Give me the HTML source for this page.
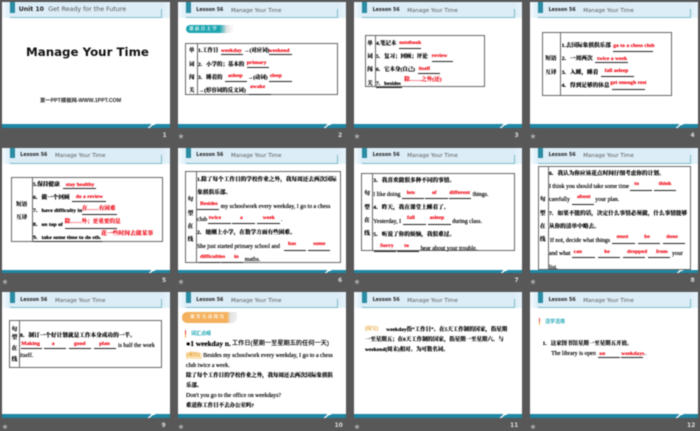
<!DOCTYPE html>
<html><head><meta charset="utf-8"><style>
html,body{margin:0;padding:0;width:700px;height:431px;overflow:hidden;background:#585858}
#w{position:absolute;left:0;top:0;width:700px;height:431px;filter:blur(.45px)}
.s{position:absolute;width:167.7px;height:125.7px;background:#fff;overflow:hidden}
.s::before{content:"";position:absolute;left:0;top:0;width:100%;height:16px;background:linear-gradient(90deg,#f4fafd,#dcedf7 8px,#dcedf7 160px,#e8f4fa)}
.f{position:absolute;left:0;top:122px;width:100%;height:3.7px;background:#1e87a4}
.n{position:absolute;left:147.5px;top:122px;width:2px;height:3.7px;background:#fff;transform:skewX(-50deg)}
.n2{position:absolute;left:149px;top:122px;width:4px;height:1px;background:#fff;transform:skewX(-50deg)}
.q{position:absolute;left:8px;top:0;width:5.2px;height:10.7px;background:#2a8ba3}
.l{position:absolute;left:7.7px;top:15px;width:152px;height:1px;background:#7dbccc}
.v{position:absolute;left:159.4px;top:7px;width:1px;height:9px;background:#7dbccc}
.h1,.h2{position:absolute;line-height:0;white-space:nowrap;font-family:"DejaVu Sans","Liberation Sans",sans-serif}
.h1{left:18.3px;top:8.7px;font-size:4.8px;font-weight:700;color:#222}
.h2{left:53px;top:8.7px;font-size:5.5px;color:#555}
.s b{position:absolute;line-height:0;white-space:nowrap;color:#000;font:700 5.65px/0 "Liberation Serif","Noto Serif CJK SC",serif;text-shadow:0 0 .4px #000}
.s.sm b{font-size:5.45px}
.s b.r{color:#f0101c;font-size:5.6px;text-shadow:0 0 .35px #f0101c}
.s b.e{font-weight:400;font-size:5.9px;color:#000;text-shadow:0 0 .35px #000}
.s i{position:absolute;height:.8px;background:#222}
.b{position:absolute;border:1px solid #666;box-sizing:border-box}
.w{position:absolute;width:1px;background:#666}
.m{position:absolute;font:700 6px/1 "DejaVu Sans",sans-serif;color:#ddd;white-space:nowrap}
.x{position:absolute;width:1.4px;height:7.3px;background:linear-gradient(#e8403a,#e8403a 55%,#f4b23c 55%)}
</style></head><body><div id="w">

<div class="s" style="left:2px;top:2px"><div class="q"></div><div class="l"></div><div class="v"></div>
<span class="h1" style="left:16.7px;top:7.7px;font-size:6.2px">Unit 10</span><span class="h2" style="left:46.3px;top:7.7px;font-size:6.3px">Get Ready for the Future</span>
<span style="position:absolute;left:24px;top:49.7px;line-height:0;white-space:nowrap;font:700 11.8px/0 'DejaVu Sans',sans-serif;color:#111">Manage Your Time</span>
<span style="position:absolute;left:38px;top:99px;line-height:0;white-space:nowrap;font:700 5.3px/0 'Liberation Sans','Noto Sans CJK SC',sans-serif;color:#222">第一PPT模板网-WWW.1PPT.COM</span>
<div class="f"></div><div class="n"></div><div class="n2"></div></div>

<div class="s sm" style="left:178px;top:2px"><div class="q"></div><div class="l"></div><div class="v"></div><span class="h1">Lesson 56</span><span class="h2">Manage Your Time</span>
<div style="position:absolute;left:8px;top:23px;width:48px;height:8px;border-radius:4px 0 4px 4px;background:linear-gradient(90deg,#1ea5b0,#1ea5b0 70%,#e4e4e4 85%,#fff)"></div>
<b style="left:11px;top:27px;color:#fff;font-size:4.6px;letter-spacing:1.2px;text-shadow:none">课前自主学</b>
<div class="b" style="left:7px;top:41px;width:153px;height:52px"></div><div class="w" style="left:19px;top:41px;height:52px"></div>
<b style="left:11px;top:49px">单</b><b style="left:11px;top:62.5px">词</b><b style="left:11px;top:75.5px">闯</b><b style="left:11px;top:89px">关</b>
<b style="left:20px;top:49px">1.工作日</b><i style="left:43px;top:52px;width:22px"></i><b class="r" style="left:43px;top:49px">weekday</b><b style="left:66px;top:49px">→(对应词)</b><i style="left:90.7px;top:52px;width:23px"></i><b class="r" style="left:90.7px;top:49px">weekend</b>
<b style="left:20px;top:62.5px">2．小学的；基本的</b><i style="left:68.7px;top:65px;width:22.6px"></i><b class="r" style="left:68.7px;top:61px">primary</b>
<b style="left:20px;top:75.5px">3．睡着的</b><i style="left:47px;top:78.7px;width:22.3px"></i><b class="r" style="left:50px;top:74px">asleep</b><b style="left:69.7px;top:75.5px">→(动词)</b><i style="left:91.3px;top:78.7px;width:22.4px"></i><b class="r" style="left:92px;top:73.5px">sleep</b>
<b style="left:20.7px;top:89px">→(形容词的反义词)</b><i style="left:71.3px;top:92px;width:21.4px"></i><b class="r" style="left:72px;top:85.3px">awake</b>
<div class="f"></div><div class="n"></div><div class="n2"></div></div>

<div class="s sm" style="left:354.3px;top:2px"><div class="q"></div><div class="l"></div><div class="v"></div><span class="h1">Lesson 56</span><span class="h2">Manage Your Time</span>
<div class="b" style="left:11px;top:33.3px;width:120px;height:52px"></div><div class="w" style="left:21px;top:33.3px;height:52px"></div>
<b style="left:13px;top:41.7px">单</b><b style="left:13px;top:55px">词</b><b style="left:13px;top:68.3px">闯</b><b style="left:13px;top:82px">关</b>
<b style="left:21.7px;top:41.7px">4.笔记本</b><i style="left:45px;top:46px;width:22px"></i><b class="r" style="left:45px;top:41.3px">notebook</b>
<b style="left:21.7px;top:55px">5．复习；回顾；评论</b><i style="left:77.3px;top:58.7px;width:21.7px"></i><b class="r" style="left:77.3px;top:53.7px">review</b>
<b style="left:21.7px;top:68.3px">6．它本身(自己)</b><i style="left:64px;top:71.3px;width:22px"></i><b class="r" style="left:64.3px;top:66.5px">itself</b>
<b style="left:21.7px;top:82px">7．besides</b><i style="left:21.7px;top:84.5px;width:26px"></i><b class="r" style="left:50px;top:78px">除……之外(还)</b>
<div class="f"></div><div class="n"></div><div class="n2"></div></div>

<div class="s" style="left:530.3px;top:2px"><div class="q"></div><div class="l"></div><div class="v"></div><span class="h1">Lesson 56</span><span class="h2">Manage Your Time</span>
<div class="b" style="left:12px;top:29.7px;width:129.3px;height:64px"></div><div class="w" style="left:30px;top:29.7px;height:64px"></div>
<b style="left:15px;top:57.3px">短语</b><b style="left:15px;top:70.7px">互译</b>
<b style="left:31.3px;top:44.3px">1.去国际象棋俱乐部</b><i style="left:83px;top:49px;width:39.3px"></i><b class="r" style="left:83px;top:44px">go to a chess club</b>
<b style="left:31.3px;top:57.3px">2．一周两次</b><i style="left:65px;top:60.3px;width:33px"></i><b class="r" style="left:66.7px;top:56.7px">twice a week</b>
<b style="left:31.3px;top:70.7px">3．入睡，睡着</b><i style="left:70.7px;top:73.7px;width:33.3px"></i><b class="r" style="left:74.3px;top:68.7px">fall asleep</b>
<b style="left:31.3px;top:84.3px">4．得到足够的休息</b><i style="left:81.7px;top:87.3px;width:33.3px"></i><b class="r" style="left:80px;top:81.3px">get enough rest</b>
<div class="f"></div><div class="n"></div><div class="n2"></div></div>

<div class="s" style="left:2px;top:147.7px"><div class="q"></div><div class="l"></div><div class="v"></div><span class="h1">Lesson 56</span><span class="h2">Manage Your Time</span>
<div class="b" style="left:9px;top:29px;width:151.7px;height:65px"></div><div class="w" style="left:30px;top:29px;height:65px"></div>
<b style="left:14px;top:57px">短语</b><b style="left:14px;top:70px">互译</b>
<b style="left:31px;top:37px">5.保持健康</b><i style="left:61.3px;top:40px;width:32.4px"></i><b class="r" style="left:63.7px;top:37.5px">stay healthy</b>
<b style="left:31px;top:50.3px">6．做一个回顾</b><i style="left:70.3px;top:53.7px;width:33.4px"></i><b class="r" style="left:73.7px;top:49.3px">do a review</b>
<b style="left:31px;top:63.7px">7．have difficulty in</b><i style="left:80px;top:66.7px;width:35.3px"></i><b class="r" style="left:80px;top:61.7px">在……有困难</b>
<b style="left:31px;top:77.3px">8．on top of</b><i style="left:62.7px;top:80px;width:52.6px"></i><b class="r" style="left:62.7px;top:74.7px">除……外；更重要的是</b>
<b style="left:31px;top:90.7px">9．take some time to do sth.</b><i style="left:31px;top:93px;width:69px"></i><b class="r" style="left:99px;top:86.7px;font-size:5.8px">花一些时间去做某事</b>
<div class="f"></div><div class="n"></div><div class="n2"></div></div>

<div class="s" style="left:178px;top:147.7px"><div class="q"></div><div class="l"></div><div class="v"></div><span class="h1">Lesson 56</span><span class="h2">Manage Your Time</span>
<div class="b" style="left:7px;top:23.7px;width:155.7px;height:91.3px"></div><div class="w" style="left:18px;top:23.7px;height:91.3px;width:1.4px"></div>
<b style="left:9.6px;top:52.3px">句</b><b style="left:9.6px;top:66px">型</b><b style="left:9.6px;top:79px">在</b><b style="left:9.6px;top:92.3px">线</b>
<b style="left:19px;top:32px">1.除了每个工作日的学校作业之外，我每周还去两次国际</b>
<b style="left:19.3px;top:45.7px">象棋俱乐部。</b>
<b class="r" style="left:22px;top:56.7px">Besides</b><i style="left:19.3px;top:61.7px;width:22px"></i><b class="e" style="left:42.7px;top:59px">my schoolwork every weekday, I go to a chess</b>
<b class="e" style="left:19px;top:72.3px">club</b><i style="left:30.3px;top:75px;width:22.4px"></i><b class="r" style="left:30.7px;top:70px">twice</b><i style="left:54.3px;top:75px;width:22.4px"></i><b class="r" style="left:62px;top:70px">a</b><i style="left:79.3px;top:75px;width:22.4px"></i><b class="r" style="left:84.7px;top:70px">week</b><b class="e" style="left:103px;top:72.3px">.</b>
<b style="left:19px;top:85.7px">2．她刚上小学，在数学方面有些困难。</b>
<b class="e" style="left:19px;top:99.3px">She just started primary school and</b><i style="left:105.7px;top:102px;width:22px"></i><b class="r" style="left:110px;top:96.3px">has</b><i style="left:130px;top:102px;width:22px"></i><b class="r" style="left:135.3px;top:96.3px">some</b>
<b class="r" style="left:22px;top:109.3px">difficulties</b><i style="left:21px;top:114px;width:21px"></i><b class="r" style="left:56px;top:109.3px">in</b><i style="left:42.7px;top:114px;width:22.6px"></i><b class="e" style="left:66.7px;top:112.7px">maths.</b>
<div class="f"></div><div class="n"></div><div class="n2"></div></div>

<div class="s" style="left:354.3px;top:147.7px"><div class="q"></div><div class="l"></div><div class="v"></div><span class="h1">Lesson 56</span><span class="h2">Manage Your Time</span>
<div class="b" style="left:7px;top:25.3px;width:153.3px;height:78px"></div><div class="w" style="left:17.3px;top:25.3px;height:78px;width:1.4px"></div>
<b style="left:10px;top:46.7px">句</b><b style="left:10px;top:60px">型</b><b style="left:10px;top:73.3px">在</b><b style="left:10px;top:86.7px">线</b>
<b style="left:19px;top:33.3px">3．我喜欢做很多种不同的事情。</b>
<b class="e" style="left:19px;top:47.3px">I like doing</b><i style="left:47.3px;top:50px;width:22.7px"></i><b class="r" style="left:52.3px;top:45px">lots</b><i style="left:71px;top:50px;width:22.3px"></i><b class="r" style="left:77.7px;top:45px">of</b><i style="left:95px;top:50px;width:22px"></i><b class="r" style="left:95px;top:45px">different</b><b class="e" style="left:118.3px;top:47.3px">things.</b>
<b style="left:19px;top:60.3px">4．昨天，我在课堂上睡着了。</b>
<b class="e" style="left:19px;top:74px">Yesterday, I</b><i style="left:48.7px;top:76.7px;width:22.6px"></i><b class="r" style="left:52.7px;top:70.7px">fall</b><i style="left:74px;top:76.7px;width:22.3px"></i><b class="r" style="left:75.3px;top:70.7px">asleep</b><b class="e" style="left:98px;top:74px">during class.</b>
<b style="left:19px;top:87.3px">5．听说了你的烦恼，我很难过。</b>
<b class="r" style="left:25.7px;top:98px">Sorry</b><i style="left:19.3px;top:103px;width:22px"></i><b class="r" style="left:50px;top:98px">to</b><i style="left:42.7px;top:103px;width:22.3px"></i><b class="e" style="left:66.3px;top:101px">hear about your trouble.</b>
<div class="f"></div><div class="n"></div><div class="n2"></div></div>

<div class="s" style="left:530.3px;top:147.7px"><div class="q"></div><div class="l"></div><div class="v"></div><span class="h1">Lesson 56</span><span class="h2">Manage Your Time</span>
<div class="f"></div><div class="n"></div><div class="n2"></div>
<div class="b" style="left:7.3px;top:18px;width:153px;height:104.3px"></div><div class="w" style="left:17.6px;top:18px;height:104.3px;width:1.4px"></div>
<b style="left:9.6px;top:52.7px">句</b><b style="left:9.6px;top:66px">型</b><b style="left:9.6px;top:79.3px">在</b><b style="left:9.6px;top:92.7px">线</b>
<b style="left:18.7px;top:26px">6．我认为你应该花点时间仔细考虑你的计划。</b>
<b class="e" style="left:18.7px;top:39.3px">I think you should take some time</b><i style="left:99.3px;top:42px;width:22px"></i><b class="r" style="left:104px;top:36.7px">to</b><i style="left:123.7px;top:42px;width:22px"></i><b class="r" style="left:128.3px;top:36.7px">think</b>
<b class="e" style="left:18.7px;top:52.7px">carefully</b><i style="left:41.7px;top:56px;width:22px"></i><b class="r" style="left:46.7px;top:49.7px">about</b><b class="e" style="left:65px;top:52.7px">your plan.</b>
<b style="left:18.7px;top:66px">7．如果不能的话，决定什么事情必须做，什么事情能够</b>
<b style="left:18.7px;top:79.3px">从你的清单中略去。</b>
<b class="e" style="left:19.7px;top:93px">If not, decide what things</b><i style="left:82px;top:95.7px;width:22.3px"></i><b class="r" style="left:86.3px;top:89.3px">must</b><i style="left:107.3px;top:95.7px;width:22.4px"></i><b class="r" style="left:114px;top:89.3px">be</b><i style="left:132.3px;top:95.7px;width:22.4px"></i><b class="r" style="left:136px;top:89.3px">done</b>
<b class="e" style="left:18.7px;top:106.3px">and what</b><i style="left:42px;top:109.3px;width:22.3px"></i><b class="r" style="left:43.3px;top:104px">can</b><i style="left:67.3px;top:109.3px;width:22.4px"></i><b class="r" style="left:74px;top:104px">be</b><i style="left:92.7px;top:109.3px;width:22px"></i><b class="r" style="left:96.7px;top:104px">dropped</b><i style="left:117.7px;top:109.3px;width:22px"></i><b class="r" style="left:125.7px;top:104px">from</b><b class="e" style="left:141.7px;top:106.3px">your</b>
<b class="e" style="left:18.7px;top:120px">list.</b>
</div>

<div class="s" style="left:2px;top:292.3px"><div class="q"></div><div class="l"></div><div class="v"></div><span class="h1">Lesson 56</span><span class="h2">Manage Your Time</span>
<div class="b" style="left:6.7px;top:28px;width:153.6px;height:47.3px"></div><div class="w" style="left:17px;top:28px;height:47.3px"></div>
<b style="left:9.6px;top:38px">句</b><b style="left:9.6px;top:46px">型</b><b style="left:9.6px;top:57px">在</b><b style="left:9.6px;top:68px">线</b>
<b style="left:18px;top:43.3px">8．制订一个好计划就是工作本身成功的一半。</b>
<b class="r" style="left:19.3px;top:51.3px">Making</b><i style="left:18.7px;top:56px;width:21.6px"></i><b class="r" style="left:49.7px;top:51.3px">a</b><i style="left:42px;top:56px;width:22px"></i><b class="r" style="left:72px;top:51.3px">good</b><i style="left:67px;top:56px;width:22px"></i><b class="r" style="left:97.3px;top:51.3px">plan</b><i style="left:92.3px;top:56px;width:22px"></i><b class="e" style="left:116px;top:53.3px">is half the work</b>
<b class="e" style="left:18px;top:63.7px">itself.</b>
<div class="f"></div><div class="n"></div><div class="n2"></div></div>

<div class="s sm" style="left:178px;top:292.3px"><div class="q"></div><div class="l"></div><div class="v"></div><span class="h1">Lesson 56</span><span class="h2">Manage Your Time</span>
<div style="position:absolute;left:4.3px;top:19.7px;width:55px;height:10.6px;border-radius:5px 0 5px 5px;background:linear-gradient(90deg,#f4b05c,#f4b05c 82%,#e2e2e2 88%,#eee)"></div>
<b style="left:12px;top:25px;color:#fff;font-size:4.6px;letter-spacing:1.3px;text-shadow:none">课堂互动探究</b>
<div class="x" style="left:7px;top:38px"></div><b style="left:13px;top:41.7px;color:#1aa5b5;font-family:'Liberation Sans','Noto Sans CJK SC',sans-serif;font-size:5px;text-shadow:none">词汇点睛</b>
<b style="left:8px;top:51.3px;font-size:7.3px">●1 weekday n.</b><b style="left:54px;top:51.3px;font-family:'Liberation Sans','Noto Sans CJK SC',sans-serif;font-size:6.2px;font-weight:400;color:#000">工作日(星期一至星期五的任何一天)</b>
<div style="position:absolute;left:8px;top:60.5px;width:16px;height:6px;background:#fbe3b8"></div><b style="left:8.5px;top:63.7px;color:#e8a030;font-size:5px;text-shadow:none">[观察]</b>
<b class="e" style="left:25.3px;top:63.7px">Besides my schoolwork every weekday, I go to a chess</b>
<b class="e" style="left:8px;top:73.7px">club twice a week.</b>
<b style="left:8px;top:83.7px">除了每个工作日的学校作业之外，我每周还去两次国际象棋俱</b>
<b style="left:8px;top:94px">乐部。</b>
<b class="e" style="left:8px;top:103.7px">Don't you go to the office on weekdays?</b>
<b style="left:8px;top:114px">难道你工作日不去办公室吗?</b>
<div class="f"></div><div class="n"></div><div class="n2"></div></div>

<div class="s sm" style="left:354.3px;top:292.3px"><div class="q"></div><div class="l"></div><div class="v"></div><span class="h1">Lesson 56</span><span class="h2">Manage Your Time</span>
<b style="left:10.7px;top:38px;color:#e8a030;font-size:5px;text-shadow:none">[探究]</b>
<b style="left:32px;top:38px">weekday指“工作日”。在5天工作制的国家，指星期</b>
<b style="left:10.7px;top:48px">一至星期五；在6天工作制的国家，指星期一至星期六。与</b>
<b style="left:10.7px;top:58px">weekend(周末)相对。为可数名词。</b>
<div class="f"></div><div class="n"></div><div class="n2"></div></div>

<div class="s sm" style="left:530.3px;top:292.3px"><div class="q"></div><div class="l"></div><div class="v"></div><span class="h1">Lesson 56</span><span class="h2">Manage Your Time</span>
<div class="x" style="left:8.3px;top:25.7px"></div><b style="left:14.7px;top:30px;color:#1aa5b5;font-family:'Liberation Sans','Noto Sans CJK SC',sans-serif;font-size:5px;text-shadow:none">活学活用</b>
<b style="left:12.3px;top:52px">1．这家图书馆星期一至星期五开放。</b>
<b class="e" style="left:21px;top:62px">The library is open</b><i style="left:68px;top:64.7px;width:21.7px"></i><b class="r" style="left:69px;top:62px">on</b><i style="left:91px;top:64.7px;width:22px"></i><b class="r" style="left:91px;top:62px">weekdays</b><b class="e" style="left:114.7px;top:62px">.</b>
<div class="f"></div><div class="n"></div><div class="n2"></div></div>

<span class="m" style="left:162.5px;top:132.5px">1</span><span class="m" style="left:338px;top:132.5px">2</span><span class="m" style="left:514.5px;top:132.5px">3</span><span class="m" style="left:690.5px;top:132.5px">4</span>
<span class="m" style="left:162px;top:277.5px">5</span><span class="m" style="left:338px;top:277.5px">6</span><span class="m" style="left:514.5px;top:277.5px">7</span><span class="m" style="left:690.5px;top:277.5px">8</span>
<span class="m" style="left:161.5px;top:422.5px">9</span><span class="m" style="left:334.5px;top:422.5px">10</span><span class="m" style="left:510px;top:422.5px">11</span><span class="m" style="left:687px;top:422.5px">12</span>

<svg style="position:absolute;left:0;top:0" width="700" height="431" fill="#a8a8a8">
<defs><path id="st" d="M3 0 3.8 1.8 5.8 2 4.3 3.3 4.7 5.3 3 4.3 1.3 5.3 1.7 3.3 .2 2 2.2 1.8Z"/></defs>
<use href="#st" x="178" y="133.5"/><use href="#st" x="354" y="133.5"/><use href="#st" x="530" y="133.5"/>
<use href="#st" x="2" y="279"/><use href="#st" x="178" y="279"/><use href="#st" x="354" y="279"/><use href="#st" x="530" y="279"/>
<use href="#st" x="2" y="424"/><use href="#st" x="178" y="424"/><use href="#st" x="354" y="424"/><use href="#st" x="530" y="424"/>
</svg>
</div></body></html>
